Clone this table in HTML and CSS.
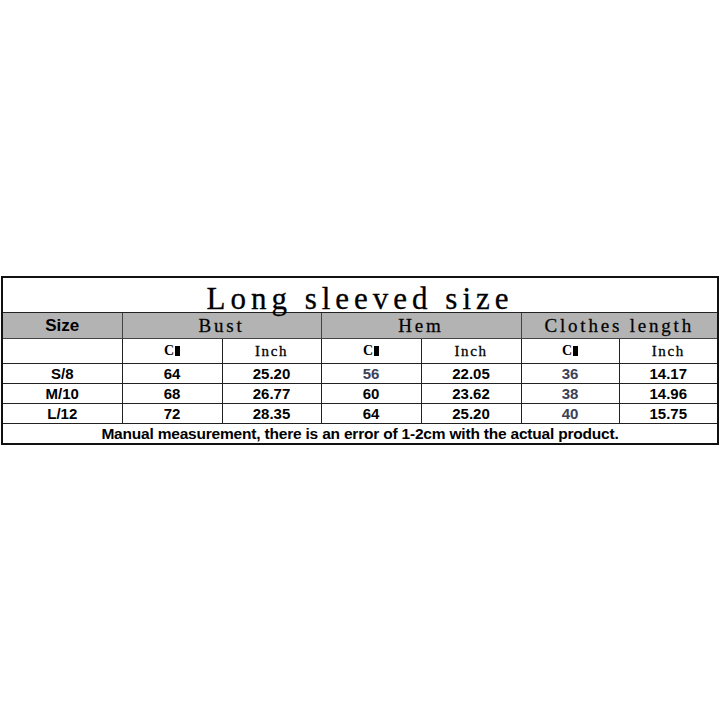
FILE: index.html
```html
<!DOCTYPE html>
<html>
<head>
<meta charset="utf-8">
<link rel="stylesheet" href="styles.css">
</head>
<body>
<div class="page">
<table class="size-table">
  <colgroup>
    <col class="c-size"><col class="c-a"><col class="c-b"><col class="c-a"><col class="c-a"><col class="c-c"><col class="c-b">
  </colgroup>
  <tr class="title-row"><td colspan="7" class="title"><span>Long sleeved size</span></td></tr>
  <tr class="head-row">
    <td class="size-h">Size</td>
    <td colspan="2" class="serif-h">Bust</td>
    <td colspan="2" class="serif-h">Hem</td>
    <td colspan="2" class="serif-h">Clothes length</td>
  </tr>
  <tr class="sub-row">
    <td></td>
    <td class="cm">C<i class="box"></i></td><td class="inch">Inch</td>
    <td class="cm">C<i class="box"></i></td><td class="inch">Inch</td>
    <td class="cm">C<i class="box"></i></td><td class="inch">Inch</td>
  </tr>
  <tr class="data-row"><td>S/8</td><td>64</td><td>25.20</td><td class="blue">56</td><td>22.05</td><td class="blue">36</td><td>14.17</td></tr>
  <tr class="data-row"><td>M/10</td><td>68</td><td>26.77</td><td>60</td><td>23.62</td><td class="blue">38</td><td>14.96</td></tr>
  <tr class="data-row"><td>L/12</td><td>72</td><td>28.35</td><td>64</td><td>25.20</td><td class="blue">40</td><td>15.75</td></tr>
  <tr class="foot-row"><td colspan="7">Manual measurement, there is an error of 1-2cm with the actual product.</td></tr>
</table>
</div>
</body>
</html>
```

FILE: styles.css
```css
html, body {
  margin: 0;
  padding: 0;
  background: #fff;
}
.page {
  width: 720px;
  height: 720px;
  padding-top: 276px;
  padding-left: 1px;
  box-sizing: border-box;
}
.size-table {
  border-collapse: collapse;
  table-layout: fixed;
  width: 718px;
  border: 2px solid #111;
  font-family: "Liberation Sans", Arial, sans-serif;
  color: #000;
}
.c-size { width: 120px; }
.c-a { width: 100px; }
.c-b { width: 99px; }
.c-c { width: 98px; }
.size-table td {
  border: 1px solid #222;
  padding: 0;
  text-align: center;
  overflow: visible;
  white-space: nowrap;
}
.title-row td {
  height: 34px;
  border-bottom: 1px solid #222;
}
.title {
  font-family: "Liberation Serif", "Times New Roman", serif;
  font-size: 31px;
  letter-spacing: 5px;
  line-height: 34px;
  vertical-align: bottom;
  -webkit-text-stroke: 0.3px #000;
}
.title span {
  position: relative;
  top: 4px;
  left: 0;
}
.head-row td {
  height: 25px;
  background: #b3b3b3;
  border-color: #444;
}
.size-h {
  font-weight: bold;
  font-size: 17px;
}
.serif-h {
  font-family: "Liberation Serif", "Times New Roman", serif;
  font-size: 19px;
  letter-spacing: 2.8px;
  -webkit-text-stroke: 0.3px #111;
}
.sub-row td {
  height: 24px;
  font-family: "Liberation Serif", "Times New Roman", serif;
}
.cm {
  font-weight: bold;
  font-size: 14px;
}
.box {
  display: inline-block;
  width: 5px;
  height: 10px;
  background: #000;
  vertical-align: -1px;
  margin-left: 1px;
}
.inch {
  font-size: 15px;
  letter-spacing: 1.6px;
  -webkit-text-stroke: 0.3px #000;
}
.data-row td {
  height: 19px;
  font-weight: bold;
  font-size: 15px;
  line-height: 19px;
}
.data-row td.blue {
  color: #3c4158;
}
.foot-row td {
  height: 19px;
  font-weight: bold;
  font-size: 15.5px;
  line-height: 19px;
  letter-spacing: -0.2px;
}
```
